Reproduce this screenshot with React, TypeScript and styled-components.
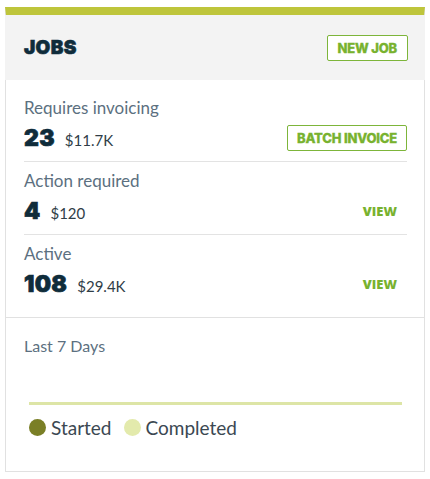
import React from 'react';
import styled, { createGlobalStyle } from 'styled-components';

const GlobalStyle = createGlobalStyle`
  body {
    margin: 0;
    background: #ffffff;
    font-family: Lato, "Open Sans", Arial, sans-serif;
  }
`;

const Page = styled.div`
  padding: 7px 5px;
`;

const Card = styled.div`
  width: 420px;
  height: 465px;
  box-sizing: border-box;
  border: 1px solid #e1e1e1;
  border-top: 8px solid #bec53b;
  display: flex;
  flex-direction: column;
  background: #ffffff;
`;

const Header = styled.div`
  height: 65px;
  background: #f3f3f3;
  display: flex;
  align-items: center;
  justify-content: space-between;
  padding: 0 17px 0 18px;
  margin: 0 -1px;
`;

const Title = styled.h2`
  margin: 0;
  padding-left: 1px;
  font-family: Inter, "DejaVu Sans", sans-serif;
  font-weight: 900;
  font-size: 19px;
  color: #0f2c3b;
  letter-spacing: 0.3px;
  -webkit-text-stroke: 0.6px #0f2c3b;
`;

const OutlineButton = styled.button<{ $pad?: number }>`
  height: 26px;
  padding: 0 ${(p) => p.$pad ?? 10}px;
  border: 1px solid #7db53a;
  border-radius: 2px;
  background: #ffffff;
  color: #78b22f;
  font-family: Inter, "DejaVu Sans", sans-serif;
  font-weight: 800;
  font-size: 13px;
  letter-spacing: -0.2px;
  -webkit-text-stroke: 0.3px #78b22f;
  cursor: pointer;
`;

const TextButton = styled.button`
  border: none;
  background: transparent;
  padding: 4px 10px;
  color: #78b22f;
  font-family: "Open Sans", Lato, sans-serif;
  font-weight: 800;
  font-size: 13px;
  cursor: pointer;
`;

const Rows = styled.div`
  padding: 9px 17px 10px 18px;
  border-bottom: 1px solid #e1e1e1;
`;

const Row = styled.div`
  padding: 8px 0;
  border-bottom: 1px solid #e3e3e3;
  &:last-child {
    border-bottom: none;
  }
`;

const Label = styled.div`
  font-size: 17px;
  line-height: 22px;
  color: #5c7080;
`;

const ValueLine = styled.div`
  margin-top: 4px;
  height: 30px;
  display: flex;
  align-items: center;
  justify-content: space-between;
`;

const Values = styled.div`
  display: flex;
  align-items: baseline;
  gap: 10px;
`;

const Count = styled.span`
  font-family: Inter, "DejaVu Sans", sans-serif;
  font-weight: 900;
  font-size: 23px;
  color: #0f2c3b;
  letter-spacing: 0.3px;
  -webkit-text-stroke: 0.7px #0f2c3b;
`;

const Amount = styled.span`
  font-size: 15px;
  color: #2f3d47;
`;

const ChartSection = styled.div`
  padding: 18px 22px 0 18px;
`;

const ChartLabel = styled.div`
  font-size: 16px;
  line-height: 20px;
  color: #5c7080;
`;

const ChartArea = styled.div`
  margin: 0 0 0 5px;
  height: 50px;
`;

const Legend = styled.div`
  margin-left: 5px;
  margin-top: 10px;
  display: flex;
  align-items: center;
  gap: 12px;
`;

const LegendItem = styled.div`
  display: flex;
  align-items: center;
  gap: 5px;
  font-size: 19px;
  color: #3b4852;
`;

const Dot = styled.span<{ $color: string }>`
  width: 17px;
  height: 17px;
  border-radius: 50%;
  background: ${(p) => p.$color};
`;

const jobs = [
  { label: 'Requires invoicing', count: '23', amount: '$11.7K', action: 'batch' },
  { label: 'Action required', count: '4', amount: '$120', action: 'view' },
  { label: 'Active', count: '108', amount: '$29.4K', action: 'view' },
];

export default function App() {
  return (
    <Page>
      <GlobalStyle />
      <Card>
        <Header>
          <Title>JOBS</Title>
          <OutlineButton $pad={10}>NEW JOB</OutlineButton>
        </Header>
        <Rows>
          {jobs.map((job) => (
            <Row key={job.label}>
              <Label>{job.label}</Label>
              <ValueLine>
                <Values>
                  <Count>{job.count}</Count>
                  <Amount>{job.amount}</Amount>
                </Values>
                {job.action === 'batch' ? (
                  <OutlineButton $pad={9}>BATCH INVOICE</OutlineButton>
                ) : (
                  <TextButton>VIEW</TextButton>
                )}
              </ValueLine>
            </Row>
          ))}
        </Rows>
        <ChartSection>
          <ChartLabel>Last 7 Days</ChartLabel>
          <ChartArea>
            <svg width="100%" height="50" viewBox="0 0 373 50" preserveAspectRatio="none">
              <line x1="0" y1="47.5" x2="373" y2="47.5" stroke="#dde5a6" strokeWidth="3" />
            </svg>
          </ChartArea>
          <Legend>
            <LegendItem>
              <Dot $color="#7a7f26" />
              Started
            </LegendItem>
            <LegendItem>
              <Dot $color="#e3eaac" />
              Completed
            </LegendItem>
          </Legend>
        </ChartSection>
      </Card>
    </Page>
  );
}
